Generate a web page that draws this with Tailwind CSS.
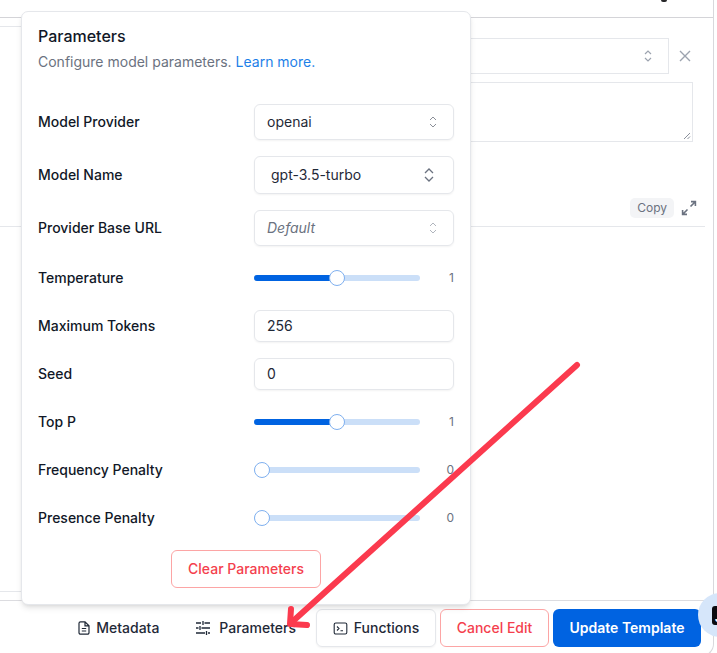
<!DOCTYPE html>
<html lang="en">
<head>
    <meta charset="UTF-8">
    <title>Parameters</title>
    <script src="https://cdn.jsdelivr.net/npm/@tailwindcss/browser@4"></script>
</head>
<body class="bg-white font-['Inter',sans-serif] text-[14px] text-[#111827]">
<div class="relative w-[717px] h-[653px] overflow-hidden bg-white">

    <!-- page behind the popover -->
    <div class="w-[714px] h-[656px] border-r border-b border-[#d8d8dc] rounded-br-[12px]">
        <div class="h-[18px] border-b border-[#d4d4d8]"></div>
        <div class="flex flex-col h-[583px] border-b border-[#dcdce0]">
            <div class="h-[9px] w-[300px] border-b border-[#e5e7eb]"></div>
            <div class="flex items-center h-[36px] mt-[11px] ml-[300px] gap-[8px]">
                <div class="w-[369px] h-[36px] border border-[#e5e7eb] flex items-center justify-end pr-[14px]">
                    <svg class="w-[12px] h-[14px] text-[#9ca3af]" viewBox="0 0 12 14" fill="none" stroke="currentColor" stroke-width="1.2"><path d="M3 5l3-3 3 3M3 9l3 3 3-3"/></svg>
                </div>
                <svg class="w-[14px] h-[14px] text-[#9ca3af] ml-[1px]" viewBox="0 0 14 14" fill="none" stroke="currentColor" stroke-width="1.4"><path d="M2 2l10 10M12 2L2 12"/></svg>
            </div>
            <div class="relative h-[60px] w-[393px] ml-[300px] mt-[8px] border border-[#e5e7eb]">
                <svg class="absolute right-[1px] bottom-[1px] w-[8px] h-[8px] text-[#6b7280]" viewBox="0 0 8 8" fill="none" stroke="currentColor" stroke-width="0.8"><path d="M1 7l6-6M4.500 7L7 4.500"/></svg>
            </div>
            <div class="flex items-center justify-end h-[21px] w-[705px] mt-[55px] gap-[7px] pr-[8px]">
                <span class="bg-[#f3f4f6] text-[#6b7280] text-[12px] rounded-[5px] px-[7px] h-[20px] leading-[20px]">Copy</span>
                <svg class="w-[16px] h-[16px] text-[#6b7280]" viewBox="0 0 16 16" fill="none" stroke="currentColor" stroke-width="1.6"><path d="M9.500 6.500L14 2M10 1.600h4.400V6M6.500 9.500L2 14M1.600 10v4.400H6"/></svg>
            </div>
            <div class="w-[705px] border-b border-[#e5e7eb] mt-[8px]"></div>
            <div class="w-[300px] border-b border-[#e5e7eb] mt-auto mb-[8px]"></div>
        </div>

        <!-- footer actions -->
        <div class="flex items-center justify-end h-[38px] mt-[8px] pr-[12px] gap-[4px] font-medium text-[#1f2937]">
            <button class="flex items-center gap-[5px] h-[38px] px-[18px] pb-[2px]">
                <svg class="w-[14px] h-[14px] mt-[2px]" viewBox="0 0 14 14" fill="none" stroke="currentColor" stroke-width="1.200"><path d="M3.500 .8H8L12 4.800V11.700a1.500 1.500 0 0 1-1.500 1.500h-7a1.500 1.500 0 0 1-1.500-1.500V2.300a1.500 1.500 0 0 1 1.500-1.500zM8 .8V4.800h4M4.800 7.500h4.400M4.800 10h4.400"/></svg>
                Metadata
            </button>
            <button class="flex items-center gap-[8px] h-[38px] px-[18px] ml-[-4px] pb-[2px]">
                <svg class="w-[16px] h-[16px] mt-[2px]" viewBox="0 0 16 16" fill="none" stroke="currentColor" stroke-width="1.300"><path d="M1 3h5M9.500 3H15M8 1v4M1 8h2.500M6.500 8H15M5 6v4M1 13h9M13 13h2M11.500 11v4"/></svg>
                Parameters
            </button>
            <button class="flex items-center gap-[6px] h-[38px] w-[120px] justify-center border border-[#e5e7eb] rounded-[6px] shadow-xs ml-[-2px] pb-[2px]">
                <svg class="w-[15px] h-[15px] mt-[2px]" viewBox="0 0 15 15" fill="none" stroke="currentColor" stroke-width="1.100"><rect x="1.200" y="2" width="12.600" height="11" rx="1.600"/><path d="M4 5.500l2 2-2 2M7.500 9.800h2.500"/></svg>
                Functions
            </button>
            <button class="h-[38px] w-[109px] border border-[#fca5a5] rounded-[6px] text-[#f43f4e] pb-[2px]">Cancel Edit</button>
            <button class="h-[38px] w-[148px] rounded-[6px] bg-[#0063e1] text-white font-semibold pb-[2px]">Update Template</button>
        </div>
    </div>

    <!-- clipped descender at the top edge -->
    <div class="absolute left-[661px] top-0 w-[6px] h-[2px] rounded-b-full bg-[#27272a]"></div>

    <!-- floating chat bubble -->
    <div class="absolute left-[698px] top-[593px] w-[44px] h-[44px] rounded-full bg-[#d6e6fa]">
        <div class="absolute left-[14px] top-[13px] w-[24px] h-[19px] rounded-[3px] bg-[#0b0b0f] text-white text-[11px] font-bold leading-[24px] pl-[3px] overflow-hidden">J</div>
    </div>

    <!-- parameters popover -->
    <div class="absolute left-[21px] top-[11px] w-[450px] h-[594px] bg-white border border-[#e5e7eb] rounded-[7px] shadow-md px-[16px] pt-[13px]">
        <h2 class="text-[16px] font-medium leading-[22px]">Parameters</h2>
        <p class="text-[14px] text-[#6b7280] leading-[20px] mt-[5px]">Configure model parameters. <a class="text-[#1d7fe8]">Learn more.</a></p>

        <div class="flex flex-col mt-[32px] font-medium">
            <div class="flex items-center justify-between h-[36px]">
                <span class="mb-[2px]">Model Provider</span>
                <div class="w-[200px] h-[36px] border border-[#e5e7eb] rounded-[6px] shadow-xs flex items-center justify-between pl-[12px] pr-[15px] pb-[2px] font-normal text-[#1f2937]">
                    openai
                    <svg class="w-[10px] h-[14px] mt-[2px] text-[#8b8f98]" viewBox="0 0 10 14" fill="none" stroke="currentColor" stroke-width="1"><path d="M2 5l3-3 3 3M2 9l3 3 3-3"/></svg>
                </div>
            </div>
            <div class="flex items-center justify-between h-[38px] mt-[16px]">
                <span class="mb-[2px]">Model Name</span>
                <div class="w-[200px] h-[38px] border border-[#e5e7eb] rounded-[6px] shadow-xs flex items-center justify-between pl-[16px] pr-[18px] pb-[2px] font-normal text-[#1f2937]">
                    gpt-3.5-turbo
                    <svg class="w-[12px] h-[16px] mt-[2px] text-[#6b7280]" viewBox="0 0 12 16" fill="none" stroke="currentColor" stroke-width="1.300"><path d="M2 6l4-4 4 4M2 10l4 4 4-4"/></svg>
                </div>
            </div>
            <div class="flex items-center justify-between h-[36px] mt-[16px]">
                <span class="mb-[2px]">Provider Base URL</span>
                <div class="w-[200px] h-[36px] border border-[#e5e7eb] rounded-[6px] shadow-xs flex items-center justify-between pl-[12px] pr-[15px] pb-[2px] font-normal italic text-[#6b7280]">
                    Default
                    <svg class="w-[10px] h-[14px] mt-[2px] text-[#b0b5bd]" viewBox="0 0 10 14" fill="none" stroke="currentColor" stroke-width="1"><path d="M2 5l3-3 3 3M2 9l3 3 3-3"/></svg>
                </div>
            </div>
            <div class="flex items-center justify-between h-[32px] mt-[16px]">
                <span class="mb-[2px]">Temperature</span>
                <div class="flex items-center w-[200px]">
                    <div class="relative w-[166px] h-[6px] rounded-full bg-[#cbdff8]">
                        <div class="h-[6px] w-[83px] rounded-full bg-[#0063e1]"></div>
                        <div class="absolute left-[75px] top-[-5px] w-[16px] h-[16px] rounded-full bg-white border border-[#7fb0ef]"></div>
                    </div>
                    <span class="ml-auto text-[12px] font-normal text-[#6b7280]">1</span>
                </div>
            </div>
            <div class="flex items-center justify-between h-[32px] mt-[16px]">
                <span class="mb-[2px]">Maximum Tokens</span>
                <div class="w-[200px] h-[32px] border border-[#e5e7eb] rounded-[6px] shadow-xs flex items-center px-[12px] pb-[2px] font-normal text-[#1f2937]">256</div>
            </div>
            <div class="flex items-center justify-between h-[32px] mt-[16px]">
                <span class="mb-[2px]">Seed</span>
                <div class="w-[200px] h-[32px] border border-[#e5e7eb] rounded-[6px] shadow-xs flex items-center px-[12px] pb-[2px] font-normal text-[#1f2937]">0</div>
            </div>
            <div class="flex items-center justify-between h-[32px] mt-[16px]">
                <span class="mb-[2px]">Top P</span>
                <div class="flex items-center w-[200px]">
                    <div class="relative w-[166px] h-[6px] rounded-full bg-[#cbdff8]">
                        <div class="h-[6px] w-[83px] rounded-full bg-[#0063e1]"></div>
                        <div class="absolute left-[75px] top-[-5px] w-[16px] h-[16px] rounded-full bg-white border border-[#7fb0ef]"></div>
                    </div>
                    <span class="ml-auto text-[12px] font-normal text-[#6b7280]">1</span>
                </div>
            </div>
            <div class="flex items-center justify-between h-[32px] mt-[16px]">
                <span class="mb-[2px]">Frequency Penalty</span>
                <div class="flex items-center w-[200px]">
                    <div class="relative w-[166px] h-[6px] rounded-full bg-[#cbdff8]">
                        <div class="absolute left-0 top-[-5px] w-[16px] h-[16px] rounded-full bg-white border border-[#7fb0ef]"></div>
                    </div>
                    <span class="ml-auto text-[12px] font-normal text-[#6b7280]">0</span>
                </div>
            </div>
            <div class="flex items-center justify-between h-[32px] mt-[16px]">
                <span class="mb-[2px]">Presence Penalty</span>
                <div class="flex items-center w-[200px]">
                    <div class="relative w-[166px] h-[6px] rounded-full bg-[#cbdff8]">
                        <div class="absolute left-0 top-[-5px] w-[16px] h-[16px] rounded-full bg-white border border-[#7fb0ef]"></div>
                    </div>
                    <span class="ml-auto text-[12px] font-normal text-[#6b7280]">0</span>
                </div>
            </div>
        </div>

        <div class="flex justify-center mt-[16px]">
            <button class="w-[150px] h-[38px] border border-[#fca5a5] rounded-[6px] text-[#f43f4e] font-medium pb-[2px]">Clear Parameters</button>
        </div>
    </div>

    <!-- red annotation arrow -->
    <svg class="absolute inset-0 w-[717px] h-[653px] pointer-events-none" viewBox="0 0 717 653" fill="none" stroke="#fb3a4e" stroke-width="6" stroke-linecap="round" stroke-linejoin="round">
        <path d="M577 365L292 622"/>
        <path d="M291 609L290 624L307 625"/>
    </svg>
</div>
</body>
</html>
